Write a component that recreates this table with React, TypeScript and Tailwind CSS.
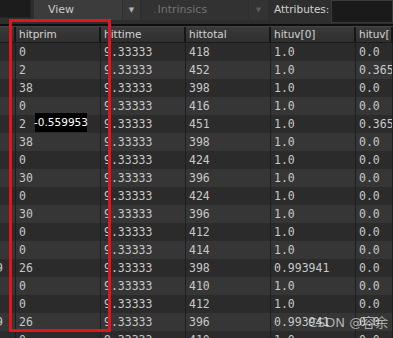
import React from "react";

const cols = ["hitprim", "hittime", "hittotal", "hituv[0]", "hituv[1]"];

const rows: { lead?: string; v: string[] }[] = [
  { v: ["0", "9.33333", "418", "1.0", "0.0"] },
  { v: ["2", "9.33333", "452", "1.0", "0.365"] },
  { v: ["38", "9.33333", "398", "1.0", "0.0"] },
  { v: ["0", "9.33333", "416", "1.0", "0.0"] },
  { v: ["2", "9.33333", "451", "1.0", "0.365"] },
  { v: ["38", "9.33333", "398", "1.0", "0.0"] },
  { v: ["0", "9.33333", "424", "1.0", "0.0"] },
  { v: ["30", "9.33333", "396", "1.0", "0.0"] },
  { v: ["0", "9.33333", "424", "1.0", "0.0"] },
  { v: ["30", "9.33333", "396", "1.0", "0.0"] },
  { v: ["0", "9.33333", "412", "1.0", "0.0"] },
  { v: ["0", "9.33333", "414", "1.0", "0.0"] },
  { lead: "9", v: ["26", "9.33333", "398", "0.993941", "0.0"] },
  { v: ["0", "9.33333", "410", "1.0", "0.0"] },
  { v: ["0", "9.33333", "412", "1.0", "0.0"] },
  { lead: "9", v: ["26", "9.33333", "396", "0.993941", "0.0"] },
  { v: ["0", "9.33333", "410", "1.0", "0.0"] },
];

const sans = { fontFamily: '"DejaVu Sans", sans-serif' };
const mono = { fontFamily: '"DejaVu Sans Mono", monospace' };

export default function App() {
  return (
    <div className="relative w-[393px] h-[338px] overflow-hidden bg-[#2d2d2d]" style={sans}>
      {/* toolbar */}
      <div className="flex items-start h-[24px] bg-[#2e2e2e]">
        <div className="w-[31px] h-[18px] bg-[#1c1c1c] border-r border-b border-[#262626]" />
        <div className="ml-[3px] flex h-[20px]">
          <div className="w-[88px] bg-[#3c3c3c] text-[#c9c9c9] text-[11px] pl-[14px] flex items-center">View</div>
          <div className="ml-px w-[17px] bg-[#383838] flex items-center justify-center text-[#b0b0b0] text-[7px]">▼</div>
        </div>
        <div className="ml-[2px] flex h-[20px]">
          <div className="w-[106px] bg-[#323232] text-[#727272] text-[11px] pl-[11px] flex items-center">
            <span className="text-[#555] mr-px">.</span>Intrinsics
          </div>
          <div className="ml-px w-[19px] bg-[#333333] flex items-center justify-center text-[#5a5a5a] text-[7px]">▼</div>
        </div>
        <div className="ml-[6px] h-[20px] flex items-center text-[#d0d0d0] text-[10.5px]">Attributes:</div>
        <div className="ml-[2px] flex-1 h-[23px] bg-[#1a1a1a] border border-[#3a3a3a]" />
      </div>
      <div className="h-[2px] bg-[#0f0f0f]" />
      {/* header */}
      <div className="grid grid-cols-[16px_85px_85px_85px_85px_1fr] h-[17px] bg-gradient-to-b from-[#3a3a3a] to-[#2f2f2f] border-b border-[#1b1b1b] border-t border-t-[#444]">
        <div className="border-r-2 border-[#161616]" />
        {cols.map((c) => (
          <div key={c} className="border-r-2 border-[#161616] pl-[3px] text-[10.5px] leading-[15px] text-[#d4d4d4] whitespace-nowrap overflow-hidden">
            {c}
          </div>
        ))}
      </div>
      {/* rows */}
      {rows.map((r, i) => (
        <div
          key={i}
          className={`grid grid-cols-[16px_85px_85px_85px_85px_1fr] h-[18px] ${i % 2 === 0 ? "bg-[#2b2b2b]" : "bg-[#363636]"}`}
          style={mono}
        >
          <div className="border-r border-[#1e1e1e] overflow-hidden text-[11.5px] leading-[18px] text-[#c8c8c8]">
            {r.lead && <span className="block -ml-[4px]">{r.lead}</span>}
          </div>
          {r.v.map((t, j) => (
            <div key={j} className="border-r border-[#1e1e1e] pl-[3px] text-[11.5px] leading-[18px] text-[#c8c8c8] whitespace-nowrap overflow-hidden">
              {t}
            </div>
          ))}
        </div>
      ))}
      {/* value tooltip */}
      <div className="absolute left-[35px] top-[113px] w-[52px] h-[19px] bg-black text-white text-[10.5px] flex items-center justify-center">
        -0.559953
      </div>
      {/* highlight box */}
      <div className="absolute left-[9px] top-[19px] w-[102px] h-[313px] border-[3px] border-[#e3141b]" />
      {/* watermark */}
      <div
        className="absolute left-[308px] top-[313px] text-[13px] text-white/60"
        style={{ fontFamily: '"DejaVu Sans", "Noto Sans CJK SC", sans-serif' }}
      >
        CSDN @容余
      </div>
    </div>
  );
}
